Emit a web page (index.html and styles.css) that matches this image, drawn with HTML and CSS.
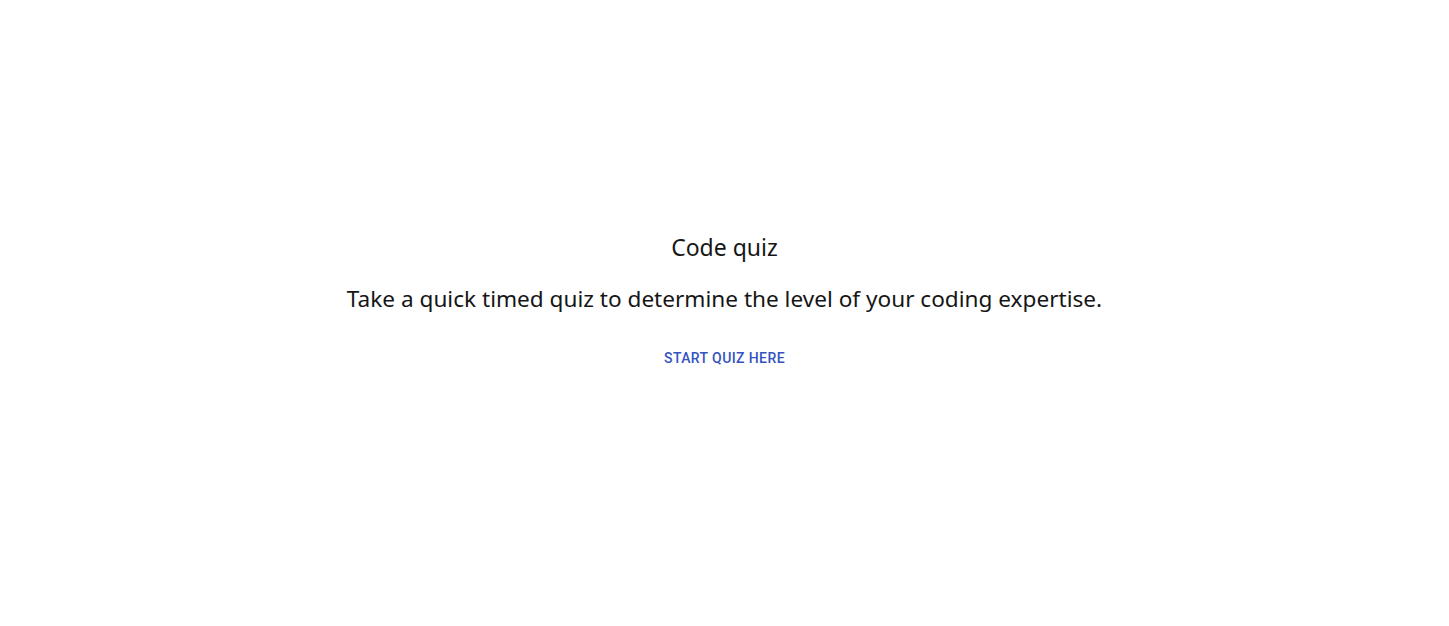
FILE: index.html
```html
<!DOCTYPE html>
<html>
<head>
<meta charset="utf-8">
<link rel="stylesheet" href="styles.css">
</head>
<body>
<main class="page">
  <div class="intro">
    <h1 class="title">Code quiz</h1>
    <p class="lead">Take a quick timed quiz to determine the level of your coding expertise.</p>
    <button class="start">Start quiz here</button>
  </div>
</main>
</body>
</html>
```

FILE: styles.css
```css
html, body {
  margin: 0;
  padding: 0;
  background: #ffffff;
}
.page {
  height: 626px;
  box-sizing: border-box;
  padding-bottom: 20px;
  display: flex;
  align-items: center;
  justify-content: center;
}
.intro {
  display: flex;
  flex-direction: column;
  align-items: center;
  font-family: "Noto Sans", "Open Sans", sans-serif;
  color: #161616;
}
.title {
  margin: 0;
  font-size: 23px;
  font-weight: 400;
  line-height: 32px;
}
.lead {
  margin: 20px 0 0;
  font-size: 22.6px;
  font-weight: 400;
  line-height: 32px;
}
.start {
  margin-top: 25px;
  border: none;
  background: transparent;
  color: #3553bf;
  font-family: Roboto, sans-serif;
  font-weight: 500;
  font-size: 14px;
  letter-spacing: 0.4px;
  text-transform: uppercase;
  line-height: 24px;
  padding: 6px 8px;
  border-radius: 4px;
  cursor: pointer;
}
```
